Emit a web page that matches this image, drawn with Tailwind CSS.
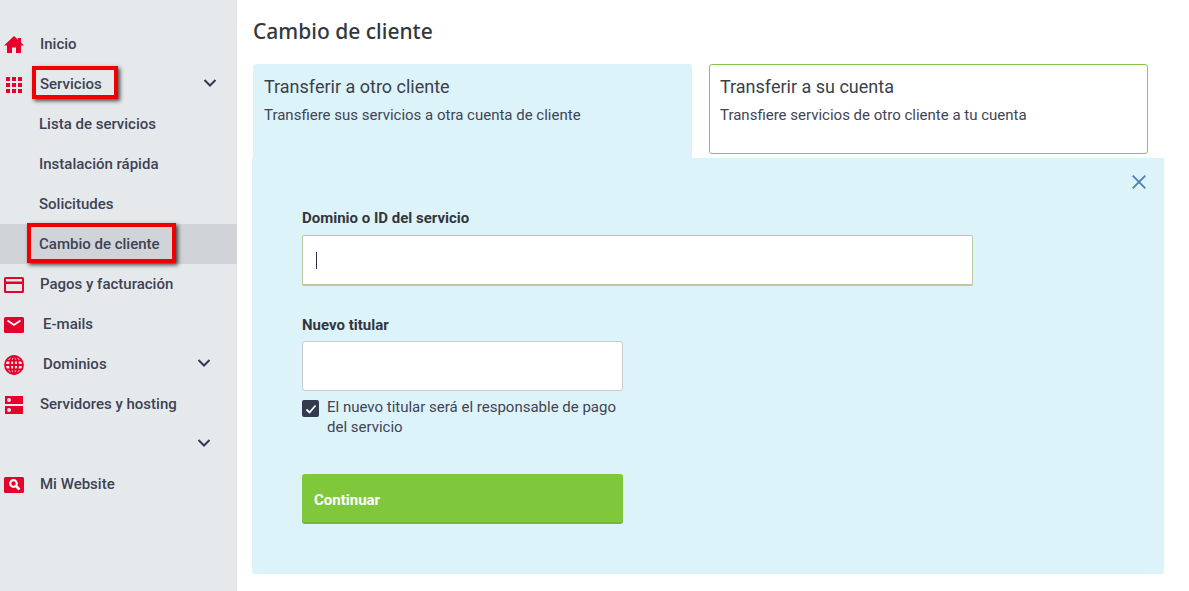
<!doctype html>
<html>
  <head>
    <title>Cambio de cliente</title>
    <meta charset="UTF-8" />
    <script src="https://cdn.jsdelivr.net/npm/@tailwindcss/browser@4"></script>
  </head>
  <body class="bg-white font-['Roboto',sans-serif] text-[#3a3f4b] overflow-hidden">
    <div class="flex h-[591px] w-[1189px]">
      <!-- sidebar -->
      <aside class="w-[237px] shrink-0 bg-[#e6e9ec] pt-6 text-[15px] font-medium text-[#3d4354]">
        <a class="flex h-10 items-center pt-px">
          <svg class="ml-1 mr-[16px] h-5 w-5" viewBox="0 0 20 20" fill="#e6002b"><path d="M10 1 0 10.500h3V18h5v-5.500h4V18h5v-7.500h3l-3-2.900V3h-3v1.800z"/></svg>
          <span>Inicio</span>
        </a>
        <a class="relative flex h-10 items-center pt-px">
          <svg class="ml-[6px] mr-[18px] h-4 w-4" viewBox="0 0 16 16" fill="#e6002b"><path d="M0 0h4v4H0zM6 0h4v4H6zM12 0h4v4h-4zM0 6h4v4H0zM6 6h4v4H6zM12 6h4v4h-4zM0 12h4v4H0zM6 12h4v4H6zM12 12h4v4h-4z"/></svg>
          <span>Servicios</span>
          <svg class="absolute left-[203px] top-[13px] h-3 w-3.5" viewBox="0 0 14 12" fill="none" stroke="#2f3a55" stroke-width="2"><path d="M1.500 3 7 8.500 12.500 3"/></svg>
          <div class="absolute left-[32px] top-[2px] h-[33px] w-[86px] border-[4px] border-[#f00000] shadow-[2px_2px_4px_rgba(0,0,0,0.7)]"></div>
        </a>
        <a class="flex h-10 items-center pl-[39px] pt-px">Lista de servicios</a>
        <a class="flex h-10 items-center pl-[39px] pt-px">Instalación rápida</a>
        <a class="flex h-10 items-center pl-[39px] pt-px">Solicitudes</a>
        <a class="relative flex h-10 items-center bg-[#d0d3d7] pl-[39px] pt-px">
          <span>Cambio de cliente</span>
          <div class="absolute left-[27px] top-[-1px] h-[40px] w-[149px] border-[4px] border-[#f00000] shadow-[2px_2px_4px_rgba(0,0,0,0.7)]"></div>
        </a>
        <a class="flex h-10 items-center pt-px">
          <svg class="ml-1 mr-[16px] h-4 w-5" viewBox="0 0 20 16" fill="#e6002b"><path fill-rule="evenodd" d="M1.500 0h17A1.500 1.500 0 0 1 20 1.500v13a1.500 1.500 0 0 1-1.500 1.500h-17A1.500 1.500 0 0 1 0 14.500v-13A1.500 1.500 0 0 1 1.500 0zM2 2v2.500h16V2zM2 7v7h16V7z"/></svg>
          <span>Pagos y facturación</span>
        </a>
        <a class="flex h-10 items-center pt-px">
          <svg class="ml-1 mr-[19px] h-4 w-5" viewBox="0 0 20 16"><rect width="20" height="16" rx="1.500" fill="#e6002b"/><path d="M3.500 3.500 10 8 16.500 3.500" fill="none" stroke="#fff" stroke-width="1.800"/></svg>
          <span>E-mails</span>
        </a>
        <a class="relative flex h-10 items-center pt-px">
          <svg class="ml-1 mr-[19px] h-5 w-5" viewBox="0 0 20 20" fill="none" stroke="#e6002b" stroke-width="1.800"><circle cx="10" cy="10" r="9"/><ellipse cx="10" cy="10" rx="4" ry="9"/><path d="M1 10h18M2.200 5.500h15.600M2.200 14.500h15.600M10 1v18"/></svg>
          <span>Dominios</span>
          <svg class="absolute left-[197px] top-[13px] h-3 w-3.5" viewBox="0 0 14 12" fill="none" stroke="#2f3a55" stroke-width="2"><path d="M1.500 3 7 8.500 12.500 3"/></svg>
        </a>
        <a class="flex h-10 items-center pt-px">
          <svg class="ml-[5px] mr-[17px] h-[18px] w-[18px]" viewBox="0 0 18 18" fill="#e6002b"><path fill-rule="evenodd" d="M0 0h18v8H0zM4 2a2 2 0 1 0 0 4 2 2 0 0 0 0-4zM0 10h18v8H0zM4 12a2 2 0 1 0 0 4 2 2 0 0 0 0-4z"/></svg>
          <span>Servidores y hosting</span>
        </a>
        <a class="relative flex h-10 items-center">
          <svg class="absolute left-[197px] top-[13px] h-3 w-3.5" viewBox="0 0 14 12" fill="none" stroke="#2f3a55" stroke-width="2"><path d="M1.500 3 7 8.500 12.500 3"/></svg>
        </a>
        <a class="flex h-10 items-center pt-px">
          <svg class="ml-1 mr-[16px] h-4 w-5" viewBox="0 0 20 16"><rect width="20" height="16" rx="1.500" fill="#e6002b"/><circle cx="9.500" cy="6.500" r="3.300" fill="none" stroke="#fff" stroke-width="2.200"/><path d="m12 9 3.500 3.500" stroke="#fff" stroke-width="2.600"/></svg>
          <span>Mi Website</span>
        </a>
      </aside>

      <!-- content -->
      <main class="w-[927px] pl-[15px] pt-[17px]">
        <h1 class="mb-[19px] ml-px h-7 text-[21px] leading-7 font-medium text-[#33373d] font-['Noto_Sans',sans-serif]">Cambio de cliente</h1>
        <div class="flex items-start">
          <div class="ml-px h-[94px] w-[439px] rounded-t-[3px] bg-[#ddf3fa] px-[11px] pt-[11px]">
            <p class="text-[18px] leading-6 text-[#3a3f4b]">Transferir a otro cliente</p>
            <p class="mt-[6px] text-[15px] leading-5 text-[#3f4553]">Transfiere sus servicios a otra cuenta de cliente</p>
          </div>
          <div class="ml-[17px] h-[90px] w-[439px] rounded-[3px] border border-[#83c84a] bg-white px-[10px] pt-[10px]">
            <p class="text-[18px] leading-6 text-[#3a3f4b]">Transferir a su cuenta</p>
            <p class="mt-[6px] text-[15px] leading-5 text-[#3f4553]">Transfiere servicios de otro cliente a tu cuenta</p>
          </div>
        </div>
        <section class="relative h-[416px] w-[912px] rounded-b-[3px] bg-[#ddf3fa] pl-[50px] pt-[50px]">
          <svg class="absolute left-[880px] top-[17px] h-[14px] w-[14px]" viewBox="0 0 14 14" fill="none" stroke="#4a80b5" stroke-width="1.800"><path d="m.7.7 12.600 12.600M13.300.7.7 13.300"/></svg>
          <label class="block h-5 text-[15px] leading-5 font-bold text-[#33373d]">Dominio o ID del servicio</label>
          <div class="mt-[7px] flex h-[51px] w-[671px] items-center rounded-[2px] border border-[#bcc9a0] border-b-2 bg-white pl-[13px]">
            <span class="h-[17px] w-px bg-[#333]"></span>
          </div>
          <label class="mt-[29px] block h-5 text-[15px] leading-5 font-bold text-[#33373d]">Nuevo titular</label>
          <div class="mt-[6px] h-[50px] w-[321px] rounded-[3px] border border-[#c8ccd0] bg-white"></div>
          <div class="mt-2 flex w-[321px] gap-2">
            <span class="mt-px flex h-[17px] w-[17px] shrink-0 items-center justify-center rounded-[2px] bg-[#333b4f]">
              <svg class="h-3 w-3" viewBox="0 0 12 12" fill="none" stroke="#fff" stroke-width="1.800"><path d="m1.500 6.500 3 3 6-7"/></svg>
            </span>
            <p class="-mt-0.5 text-[15px] leading-5 text-[#3f4553]">El nuevo titular será el responsable de pago del servicio</p>
          </div>
          <button class="mt-[37px] flex h-[50px] w-[321px] items-center rounded-[3px] border-b-2 border-[#74b638] bg-[#7fc83c] pl-3 pt-1 text-[15px] font-bold text-white">Continuar</button>
        </section>
      </main>
    </div>
  </body>
</html>
